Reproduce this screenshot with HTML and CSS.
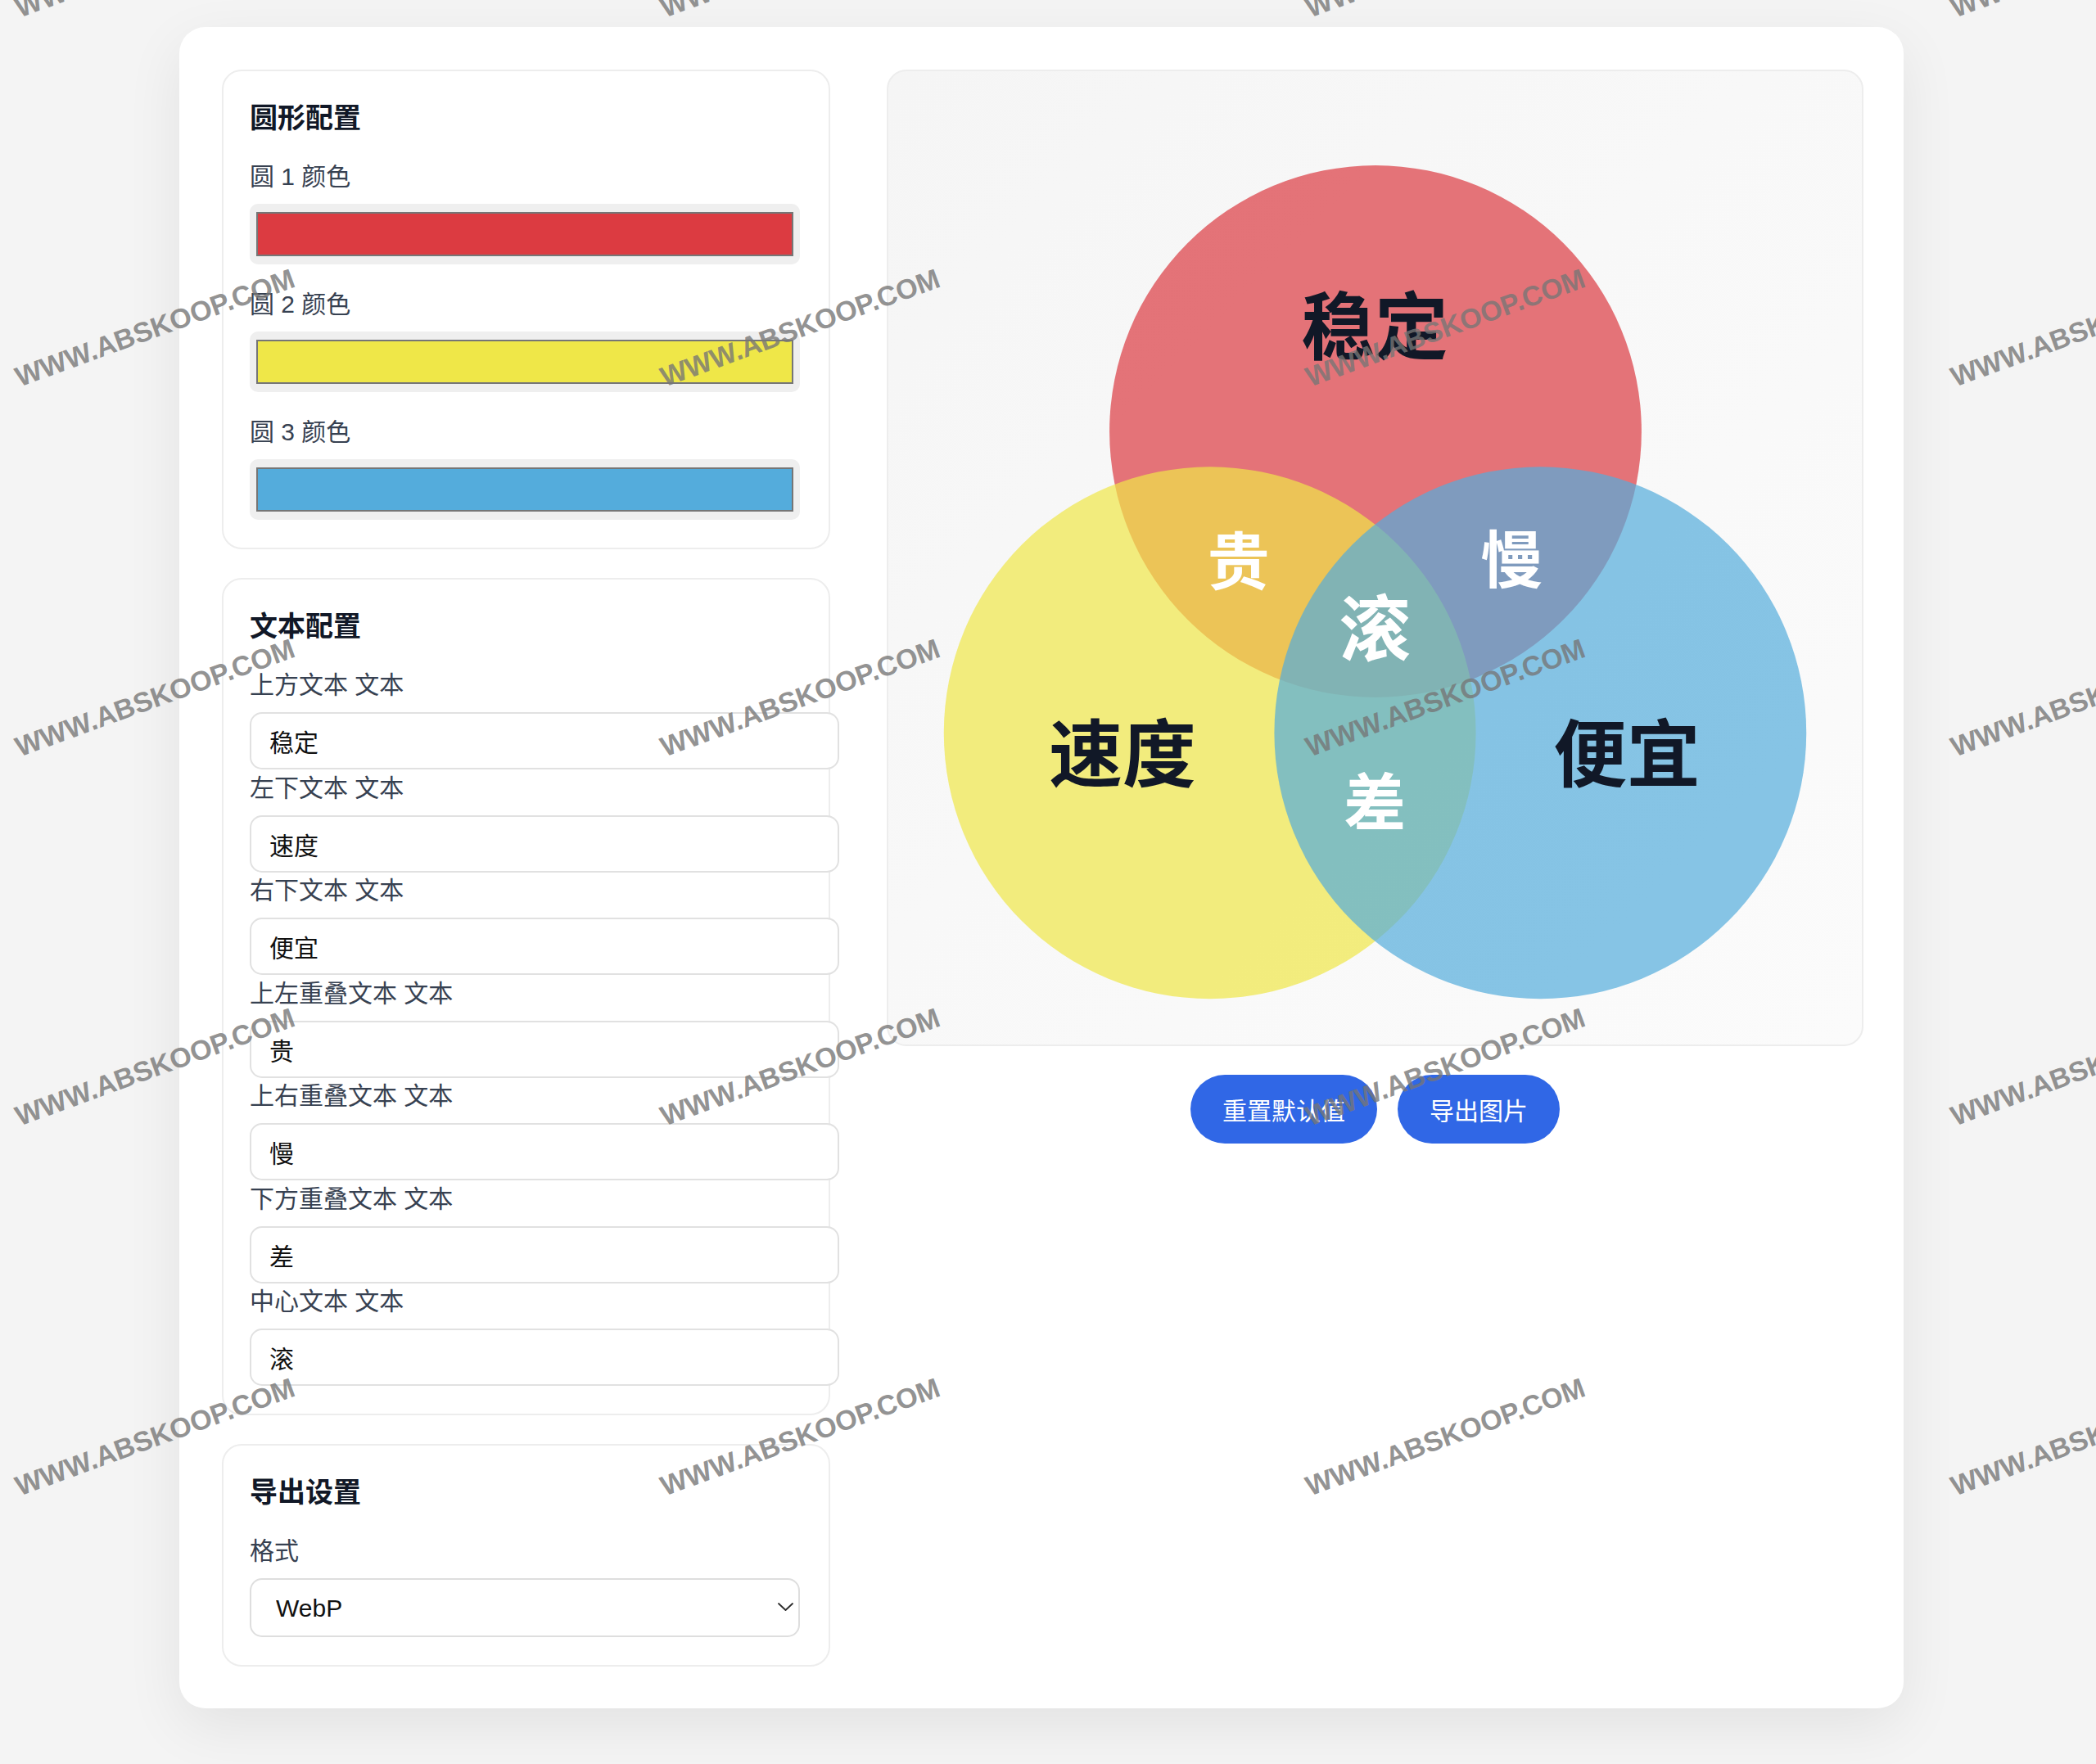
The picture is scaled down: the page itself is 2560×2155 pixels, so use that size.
FILE: index.html
```html
<!DOCTYPE html>
<html lang="zh-CN">
<head>
<meta charset="utf-8">
<title>三圆韦恩图生成器</title>
<link rel="stylesheet" href="styles.css">
</head>
<body>
<main class="app">
  <div class="layout">
    <aside class="controls">
      <section class="panel">
        <h2 class="panel-title">圆形配置</h2>
        <div class="color-list">
          <div class="field">
            <label class="field-label">圆 1 颜色</label>
            <div class="color-input"><span class="swatch swatch-red"></span></div>
          </div>
          <div class="field">
            <label class="field-label">圆 2 颜色</label>
            <div class="color-input"><span class="swatch swatch-yellow"></span></div>
          </div>
          <div class="field">
            <label class="field-label">圆 3 颜色</label>
            <div class="color-input"><span class="swatch swatch-blue"></span></div>
          </div>
        </div>
      </section>

      <section class="panel">
        <h2 class="panel-title">文本配置</h2>
        <div class="text-field">
          <label class="field-label">上方文本 文本</label>
          <input class="text-input" type="text" value="稳定">
        </div>
        <div class="text-field">
          <label class="field-label">左下文本 文本</label>
          <input class="text-input" type="text" value="速度">
        </div>
        <div class="text-field">
          <label class="field-label">右下文本 文本</label>
          <input class="text-input" type="text" value="便宜">
        </div>
        <div class="text-field">
          <label class="field-label">上左重叠文本 文本</label>
          <input class="text-input" type="text" value="贵">
        </div>
        <div class="text-field">
          <label class="field-label">上右重叠文本 文本</label>
          <input class="text-input" type="text" value="慢">
        </div>
        <div class="text-field">
          <label class="field-label">下方重叠文本 文本</label>
          <input class="text-input" type="text" value="差">
        </div>
        <div class="text-field">
          <label class="field-label">中心文本 文本</label>
          <input class="text-input" type="text" value="滚">
        </div>
      </section>

      <section class="panel">
        <h2 class="panel-title">导出设置</h2>
        <label class="field-label">格式</label>
        <div class="select-wrap">
          <select class="select">
            <option>WebP</option>
            <option>PNG</option>
            <option>JPEG</option>
          </select>
          <svg class="chevron" viewBox="0 0 19 10" aria-hidden="true">
            <path d="M1 1 L9.5 9 L18 1" fill="none" stroke="#2b2b2b" stroke-width="1.8" stroke-linecap="round" stroke-linejoin="round"/>
          </svg>
        </div>
      </section>
    </aside>

    <div class="preview-col">
      <div class="preview">
        <svg class="venn" viewBox="0 0 1193 1193">
          <circle class="c-red" cx="597" cy="441.5" r="326"/>
          <circle class="c-yellow" cx="394" cy="811" r="326"/>
          <circle class="c-blue" cx="799" cy="811" r="326"/>
          <text class="t-main" x="596" y="307">稳定</text>
          <text class="t-main" x="287" y="831">速度</text>
          <text class="t-main" x="905" y="831">便宜</text>
          <text class="t-over" x="429" y="596">贵</text>
          <text class="t-over" x="764" y="594">慢</text>
          <text class="t-over" x="596" y="891">差</text>
          <text class="t-center" x="596" y="677">滚</text>
        </svg>
      </div>
      <div class="actions">
        <button class="btn" type="button">重置默认值</button>
        <button class="btn" type="button">导出图片</button>
      </div>
    </div>
  </div>
</main>

<div class="watermarks" aria-hidden="true">
  <div class="wm-cell"><span class="wm">WWW.ABSKOOP.COM</span></div>
  <div class="wm-cell"><span class="wm">WWW.ABSKOOP.COM</span></div>
  <div class="wm-cell"><span class="wm">WWW.ABSKOOP.COM</span></div>
  <div class="wm-cell"><span class="wm">WWW.ABSKOOP.COM</span></div>
  <div class="wm-cell"><span class="wm">WWW.ABSKOOP.COM</span></div>
  <div class="wm-cell"><span class="wm">WWW.ABSKOOP.COM</span></div>
  <div class="wm-cell"><span class="wm">WWW.ABSKOOP.COM</span></div>
  <div class="wm-cell"><span class="wm">WWW.ABSKOOP.COM</span></div>
  <div class="wm-cell"><span class="wm">WWW.ABSKOOP.COM</span></div>
  <div class="wm-cell"><span class="wm">WWW.ABSKOOP.COM</span></div>
  <div class="wm-cell"><span class="wm">WWW.ABSKOOP.COM</span></div>
  <div class="wm-cell"><span class="wm">WWW.ABSKOOP.COM</span></div>
  <div class="wm-cell"><span class="wm">WWW.ABSKOOP.COM</span></div>
  <div class="wm-cell"><span class="wm">WWW.ABSKOOP.COM</span></div>
  <div class="wm-cell"><span class="wm">WWW.ABSKOOP.COM</span></div>
  <div class="wm-cell"><span class="wm">WWW.ABSKOOP.COM</span></div>
  <div class="wm-cell"><span class="wm">WWW.ABSKOOP.COM</span></div>
  <div class="wm-cell"><span class="wm">WWW.ABSKOOP.COM</span></div>
  <div class="wm-cell"><span class="wm">WWW.ABSKOOP.COM</span></div>
  <div class="wm-cell"><span class="wm">WWW.ABSKOOP.COM</span></div>
</div>
</body>
</html>
```

FILE: styles.css
```css
html, body {
  margin: 0;
  padding: 0;
}

body {
  position: relative;
  width: 2560px;
  height: 2155px;
  overflow: hidden;
  background: #f4f4f4;
  font-family: "Liberation Sans", "Noto Sans CJK SC", sans-serif;
  color: #111827;
}

.app {
  width: 2106px;
  box-sizing: border-box;
  margin: 33px 0 0 219px;
  padding: 52px 49px 51px 52px;
  background: #ffffff;
  border-radius: 32px;
  box-shadow: 0 22px 70px rgba(0, 0, 0, 0.075);
}

.layout {
  display: grid;
  grid-template-columns: 743px 1193px;
  column-gap: 69px;
  align-items: start;
}

.controls {
  display: flex;
  flex-direction: column;
  gap: 35px;
}

.panel {
  background: #ffffff;
  border: 2px solid #ededed;
  border-radius: 24px;
  padding: 34px 35px 34px 32px;
}

.panel-title {
  margin: 0 0 29px;
  font-size: 34px;
  line-height: 46px;
  font-weight: 700;
  color: #111827;
}

.color-list {
  display: flex;
  flex-direction: column;
  gap: 29px;
}

.field-label {
  display: block;
  font-size: 30px;
  line-height: 40px;
  color: #374151;
  margin-bottom: 13px;
}

.color-input {
  height: 74px;
  box-sizing: border-box;
  padding: 10px 8px;
  background: #efefef;
  border-radius: 10px;
}

.swatch {
  display: block;
  height: 100%;
  box-sizing: border-box;
  border: 2px solid #767676;
}

.swatch-red { background: #dc3b41; }
.swatch-yellow { background: #efe748; }
.swatch-blue { background: #54acdc; }

.text-field + .text-field {
  margin-top: 2.5px;
}

.text-input {
  display: block;
  width: 100%;
  height: 66px;
  margin: 0;
  padding: 0 22px;
  box-sizing: content-box;
  border: 2px solid #e1e1e1;
  border-radius: 15px;
  background: #ffffff;
  font-family: "Liberation Sans", "Noto Sans CJK SC", sans-serif;
  font-size: 30px;
  color: #111111;
  outline: none;
}

.select-wrap {
  position: relative;
}

.select {
  display: block;
  width: 100%;
  height: 72px;
  margin: 0;
  box-sizing: border-box;
  padding: 0 60px 0 30px;
  border: 2px solid #dedede;
  border-radius: 15px;
  background: #ffffff;
  -webkit-appearance: none;
  appearance: none;
  font-family: "Liberation Sans", "Noto Sans CJK SC", sans-serif;
  font-size: 30px;
  color: #111111;
  outline: none;
}

.chevron {
  position: absolute;
  right: 8px;
  top: 30px;
  width: 19px;
  height: 10px;
  pointer-events: none;
}

.preview-col {
  display: flex;
  flex-direction: column;
  align-items: center;
}

.preview {
  width: 1193px;
  height: 1193px;
  box-sizing: border-box;
  border: 2px solid #ededed;
  border-radius: 24px;
  background: linear-gradient(135deg, #f5f5f5 0%, #f8f8f8 45%, #fbfbfb 100%);
  overflow: hidden;
}

.venn {
  display: block;
  width: 100%;
  height: 100%;
}

.c-red { fill: #dc3b41; fill-opacity: 0.7; }
.c-yellow { fill: #efe748; fill-opacity: 0.7; }
.c-blue { fill: #54acdc; fill-opacity: 0.7; }

.t-main,
.t-over,
.t-center {
  font-family: "Noto Sans CJK SC", sans-serif;
  font-weight: 700;
  text-anchor: middle;
  dominant-baseline: central;
}

.t-main {
  font-size: 90px;
  fill: #111827;
}

.t-over {
  font-size: 76px;
  fill: #ffffff;
}

.t-center {
  font-size: 88px;
  fill: #ffffff;
}

.actions {
  display: flex;
  justify-content: center;
  gap: 25px;
  margin-top: 35px;
}

.btn {
  height: 84px;
  padding: 0 39px;
  border: none;
  border-radius: 999px;
  background: #3067e6;
  color: #ffffff;
  font-family: "Liberation Sans", "Noto Sans CJK SC", sans-serif;
  font-size: 30px;
  font-weight: 400;
  cursor: pointer;
}

.watermarks {
  position: absolute;
  left: -205px;
  top: -277px;
  display: grid;
  grid-template-columns: repeat(4, 788px);
  grid-auto-rows: 451.5px;
  pointer-events: none;
}

.wm-cell {
  display: flex;
  align-items: center;
  justify-content: center;
}

.wm {
  display: block;
  white-space: nowrap;
  font-family: "Liberation Sans", sans-serif;
  font-weight: 700;
  font-size: 34px;
  line-height: 1;
  color: rgba(118, 118, 118, 0.8);
  transform: rotate(-20deg);
}
```
